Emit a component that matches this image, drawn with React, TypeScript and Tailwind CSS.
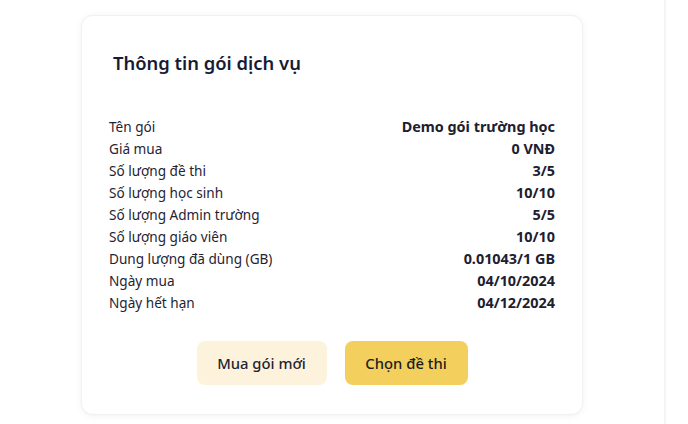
const rows: [string, string][] = [
  ["Tên gói", "Demo gói trường học"],
  ["Giá mua", "0 VNĐ"],
  ["Số lượng đề thi", "3/5"],
  ["Số lượng học sinh", "10/10"],
  ["Số lượng Admin trường", "5/5"],
  ["Số lượng giáo viên", "10/10"],
  ["Dung lượng đã dùng (GB)", "0.01043/1 GB"],
  ["Ngày mua", "04/10/2024"],
  ["Ngày hết hạn", "04/12/2024"],
];

export default function App() {
  return (
    <div
      className="flex h-[424px] w-[688px] overflow-hidden bg-white"
      style={{ fontFamily: '"Noto Sans", "Open Sans", sans-serif' }}
    >
      <div className="w-[664px] shrink-0 pl-[81px] pt-[15px]">
        <div className="w-[502px] rounded-xl border border-[#f1f1f3] bg-white px-[27px] pb-[29px] pt-[33px] shadow-[0_1px_6px_rgba(0,0,0,0.06)]">
          <h2 className="pl-[4px] text-[18.4px] font-semibold leading-[28px] text-[#161c35]">
            Thông tin gói dịch vụ
          </h2>
          <div className="mt-[39px] flex flex-col">
            {rows.map(([label, value]) => (
              <div key={label} className="flex h-[22px] items-center justify-between text-[#1f2433]">
                <span className="text-[13.6px]">{label}</span>
                <span className="text-[14.4px] font-bold text-[#1c2030]">{value}</span>
              </div>
            ))}
          </div>
          <div className="mt-[27px] flex justify-center gap-[18px]">
            <button className="h-[44px] w-[130px] rounded-lg bg-[#fdf3dc] text-[14.8px] font-medium text-[#1f2433]">
              Mua gói mới
            </button>
            <button className="h-[44px] w-[123px] rounded-lg bg-[#f3cf5e] text-[14.8px] font-medium text-[#1c1c1c]">
              Chọn đề thi
            </button>
          </div>
        </div>
      </div>
      <div className="h-full w-[2px] bg-[#f4f4f5]" />
    </div>
  );
}
